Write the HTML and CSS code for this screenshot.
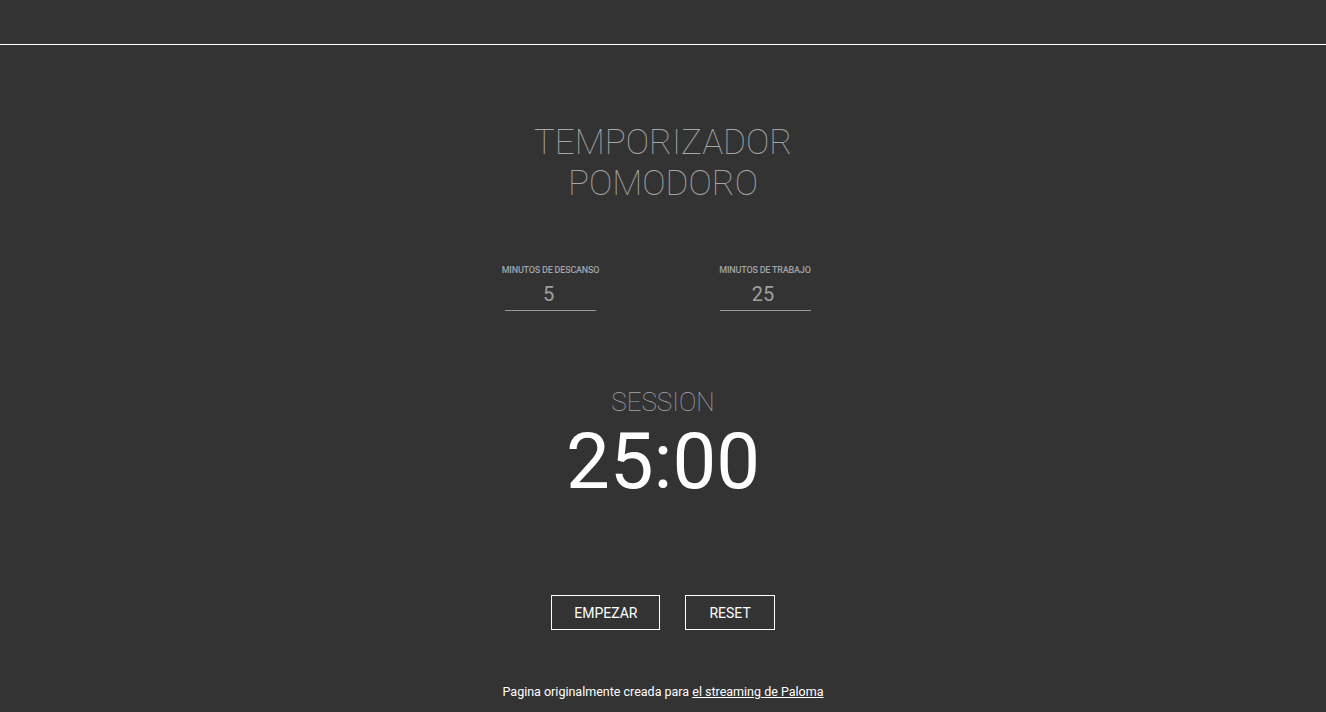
FILE: index.html
```html
<!DOCTYPE html>
<html lang="es">
<head>
<meta charset="utf-8">
<title>Temporizador Pomodoro</title>
<link rel="stylesheet" href="styles.css">
</head>
<body>
<header class="topbar"></header>
<main class="app">
  <h1 class="title">TEMPORIZADOR<br>POMODORO</h1>
  <div class="settings">
    <label class="field field-break">
      <span class="field-label">MINUTOS DE DESCANSO</span>
      <input class="field-input" type="text" value="5">
    </label>
    <label class="field field-work">
      <span class="field-label">MINUTOS DE TRABAJO</span>
      <input class="field-input" type="text" value="25">
    </label>
  </div>
  <div class="session">SESSION</div>
  <div class="timer">25:00</div>
  <div class="controls">
    <button class="btn">EMPEZAR</button>
    <button class="btn btn-reset">RESET</button>
  </div>
  <footer class="footer">Pagina originalmente creada para <a href="#" class="footer-link">el streaming de Paloma</a></footer>
</main>
</body>
</html>
```

FILE: styles.css
```css
html, body {
  margin: 0;
  padding: 0;
  background: #333333;
  height: 100%;
  overflow: hidden;
}
body {
  font-family: Roboto, "Liberation Sans", sans-serif;
  color: #ffffff;
}
.topbar {
  height: 44px;
  border-bottom: 1px solid #ffffff;
}
.app {
  display: flex;
  flex-direction: column;
  align-items: center;
}
.title {
  margin: 77px 0 0;
  font-size: 35px;
  font-weight: 100;
  line-height: 41px;
  color: #a6a6a6;
  text-align: center;
}
.settings {
  margin-top: 60px;
  display: flex;
  justify-content: center;
  gap: 117px;
  padding-right: 14px;
}
.field {
  display: flex;
  flex-direction: column;
  align-items: center;
}
.field-break { width: 101px; }
.field-work { width: 94px; }
.field-label {
  font-size: 9px;
  font-weight: 500;
  line-height: 12px;
  color: #a0a4ab;
  white-space: nowrap;
  letter-spacing: -0.2px;
}
.field-input {
  margin-top: 2px;
  width: 91px;
  height: 33px;
  box-sizing: border-box;
  padding: 0 4px 0 0;
  border: none;
  border-bottom: 1px solid #9a9a9a;
  background: transparent;
  color: #a0a0a0;
  font-family: Roboto, "Liberation Sans", sans-serif;
  font-size: 20px;
  font-weight: 400;
  text-align: center;
  outline: none;
}
.session {
  margin-top: 76px;
  font-size: 26px;
  font-weight: 100;
  line-height: 30px;
  color: #a4a4b0;
}
.timer {
  margin-top: 6px;
  font-size: 78px;
  line-height: 78px;
  font-weight: 400;
  color: #ffffff;
}
.controls {
  margin-top: 94px;
  display: flex;
  gap: 25px;
}
.btn {
  height: 35px;
  padding: 0 22px;
  border: 1px solid #ffffff;
  background: transparent;
  color: #ffffff;
  font-family: Roboto, "Liberation Sans", sans-serif;
  font-size: 14px;
  cursor: pointer;
}
.btn-reset {
  padding: 0 23px;
}
.footer {
  margin-top: 54px;
  font-size: 12.5px;
  line-height: 15px;
  color: #ffffff;
}
.footer-link {
  color: #ffffff;
  text-decoration: underline;
}
```
